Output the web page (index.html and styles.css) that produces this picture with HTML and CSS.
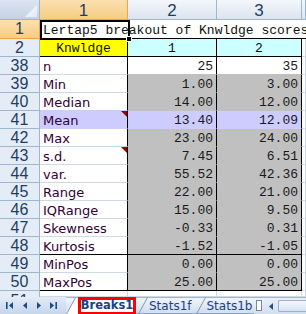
FILE: index.html
```html
<!DOCTYPE html>
<html>
<head>
<meta charset="utf-8">
<link rel="stylesheet" href="styles.css">
</head>
<body>
<div class="app">
  <div class="sheet">
    <div class="corner"><span class="corner-tri"></span></div>
    <div class="ch sel">1</div>
    <div class="ch">2</div>
    <div class="ch">3</div>
    <div class="ch edge"></div>

    <div class="rh sel">1</div>
    <div class="c title">Lertap5 breakout of Knwldge scores</div>
    <div class="selbox"><span class="handle"></span></div>

    <div class="rh">2</div>
    <div class="c hd yellow">Knwldge</div>
    <div class="c hd cyan">1</div>
    <div class="c hd cyan">2</div>
    <div class="c"></div>

    <div class="rh">38</div>
    <div class="c k">n</div>
    <div class="c d w">25</div>
    <div class="c d w">35</div>
    <div class="c"></div>

    <div class="rh">39</div>
    <div class="c k">Min</div>
    <div class="c d g">1.00</div>
    <div class="c d g">3.00</div>
    <div class="c"></div>

    <div class="rh">40</div>
    <div class="c k before-lv">Median</div>
    <div class="c d g">14.00</div>
    <div class="c d g">12.00</div>
    <div class="c"></div>

    <div class="rh">41</div>
    <div class="c k lv cm">Mean</div>
    <div class="c d lv">13.40</div>
    <div class="c d lv">12.09</div>
    <div class="c"></div>

    <div class="rh">42</div>
    <div class="c k">Max</div>
    <div class="c d g">23.00</div>
    <div class="c d g">24.00</div>
    <div class="c"></div>

    <div class="rh">43</div>
    <div class="c k cm">s.d.</div>
    <div class="c d g">7.45</div>
    <div class="c d g">6.51</div>
    <div class="c"></div>

    <div class="rh">44</div>
    <div class="c k">var.</div>
    <div class="c d g">55.52</div>
    <div class="c d g">42.36</div>
    <div class="c"></div>

    <div class="rh">45</div>
    <div class="c k">Range</div>
    <div class="c d g">22.00</div>
    <div class="c d g">21.00</div>
    <div class="c"></div>

    <div class="rh">46</div>
    <div class="c k">IQRange</div>
    <div class="c d g">15.00</div>
    <div class="c d g">9.50</div>
    <div class="c"></div>

    <div class="rh">47</div>
    <div class="c k">Skewness</div>
    <div class="c d g">-0.33</div>
    <div class="c d g">0.31</div>
    <div class="c"></div>

    <div class="rh">48</div>
    <div class="c k bb">Kurtosis</div>
    <div class="c d g bb">-1.52</div>
    <div class="c d g bb">-1.05</div>
    <div class="c"></div>

    <div class="rh">49</div>
    <div class="c k">MinPos</div>
    <div class="c d g">0.00</div>
    <div class="c d g">0.00</div>
    <div class="c"></div>

    <div class="rh">50</div>
    <div class="c k bb">MaxPos</div>
    <div class="c d g bb">25.00</div>
    <div class="c d g bb">25.00</div>
    <div class="c"></div>

    <div class="rh last">51</div>
    <div class="c"></div>
    <div class="c"></div>
    <div class="c"></div>
    <div class="c"></div>
  </div>

  <div class="tabbar">
    <div class="nav">
      <svg width="66" height="17" viewBox="0 0 66 17">
        <rect x="6" y="5" width="1.6" height="7" fill="#1E4B86"/>
        <polygon points="13,5 13,12 9,8.5" fill="#1E4B86"/>
        <polygon points="27,5 27,12 23,8.5" fill="#1E4B86"/>
        <polygon points="37,5 37,12 41,8.5" fill="#1E4B86"/>
        <polygon points="50,5 50,12 54,8.5" fill="#1E4B86"/>
        <rect x="55.4" y="5" width="1.6" height="7" fill="#1E4B86"/>
      </svg>
    </div>
    <svg class="slant" width="12" height="17" viewBox="0 0 12 17">
      <polygon points="0,17 9,1 12,1 12,17" fill="#ffffff"/>
      <line x1="0.5" y1="17" x2="9.5" y2="0.5" stroke="#7F98BC" stroke-width="1"/>
    </svg>
    <div class="tab-active">Breaks1</div>
    <div class="tab">
      <svg class="slant" width="12" height="17" viewBox="0 0 12 17">
        <line x1="2.5" y1="17" x2="11.5" y2="0.5" stroke="#7F98BC" stroke-width="1"/>
      </svg>
      <span class="tab-label">Stats1f</span>
    </div>
    <div class="tab">
      <svg class="slant" width="12" height="17" viewBox="0 0 12 17">
        <line x1="2.5" y1="17" x2="11.5" y2="0.5" stroke="#7F98BC" stroke-width="1"/>
      </svg>
      <span class="tab-label">Stats1b</span>
    </div>
    <div class="split"></div>
    <div class="hscroll">
      <svg width="14" height="17" viewBox="0 0 14 17">
        <polygon points="9,5 9,12 5,8.5" fill="#2B4E7E"/>
      </svg>
      <div class="thumb"></div>
    </div>
  </div>
</div>
</body>
</html>
```

FILE: styles.css
```css
* {
  box-sizing: border-box;
  margin: 0;
  padding: 0;
}

html, body {
  width: 306px;
  height: 314px;
  overflow: hidden;
  background: #ffffff;
}

.app {
  width: 306px;
  height: 314px;
  display: flex;
  flex-direction: column;
}

.sheet {
  display: grid;
  grid-template-columns: 40px 88px 89px 85px 4px;
  grid-template-rows: 20px 19px 18px repeat(13, 18px) 6px;
  height: 297px;
  overflow: hidden;
  font-family: "DejaVu Sans", sans-serif;
}

/* headers */
.corner {
  background: linear-gradient(#DCE5F1, #C4D2E5);
  border-right: 1px solid #9EB6CE;
  border-bottom: 1px solid #9EB6CE;
  display: flex;
  align-items: flex-end;
  justify-content: flex-end;
  padding: 0 2px 2px 0;
}

.corner-tri {
  width: 12px;
  height: 12px;
  background: linear-gradient(135deg, #FFFFFF, #E1E8F2);
  clip-path: polygon(100% 0, 100% 100%, 0 100%);
}

.ch {
  background: linear-gradient(#F4F7FB, #DCE4EF);
  border-right: 1px solid #9EB6CE;
  border-bottom: 1px solid #9EB6CE;
  color: #1F3D63;
  font: 17px "Liberation Sans", Arial, sans-serif;
  display: flex;
  align-items: center;
  justify-content: center;
  line-height: 1;
  padding-top: 1px;
}

.ch.sel {
  background: linear-gradient(#FBE0AE, #F6CD84);
  border-right-color: #F2A640;
  border-bottom-color: #F2A640;
}

.rh {
  background: #E4ECF7;
  border-right: 1px solid #9EB6CE;
  border-bottom: 1px solid #9EB6CE;
  color: #1F3D63;
  font: 16px "Liberation Sans", Arial, sans-serif;
  display: flex;
  align-items: center;
  justify-content: center;
  line-height: 1;
}

.rh.sel {
  grid-row: 2;
  grid-column: 1;
  background: linear-gradient(#FBE0AE, #F6CD84);
  border-right-color: #F2A640;
  border-bottom-color: #F2A640;
}

.rh.last {
  align-items: flex-start;
  padding-top: 2px;
  overflow: hidden;
  border-bottom: none;
}

/* cells */
.c {
  position: relative;
  background: #ffffff;
  border-right: 1px solid #D0D7E5;
  border-bottom: 1px solid #D0D7E5;
  overflow: hidden;
  white-space: nowrap;
  display: flex;
  align-items: flex-end;
  line-height: 15px;
}

.title {
  grid-row: 2;
  grid-column: 2 / 6;
  border-right: none;
  border-bottom-color: #000000;
  font: 13px "Liberation Mono", "Courier New", monospace;
  color: #111111;
  padding-left: 3px;
}

.selbox {
  grid-row: 2;
  grid-column: 2;
  margin: 0 -2px -1px 0;
  border: 2px solid #000000;
  position: relative;
  z-index: 2;
}

.handle {
  position: absolute;
  right: -4px;
  bottom: -4px;
  width: 6px;
  height: 6px;
  background: #000000;
  border: 1px solid #ffffff;
}

.hd {
  justify-content: center;
  font: 13px "Liberation Mono", "Courier New", monospace;
  color: #111111;
  border-right-color: #000000;
  border-bottom-color: #000000;
}

.yellow {
  background: #FFFF00;
}

.cyan {
  background: #CCFFFF;
}

.k {
  border-right-color: #000000;
  padding-left: 3px;
  font: 13px "DejaVu Sans", Verdana, sans-serif;
  color: #330033;
}

.d {
  border-right-color: #000000;
  justify-content: flex-end;
  padding-right: 3px;
  font: 13px "Liberation Mono", "Courier New", monospace;
  color: #1A1A1A;
}

.w {
  border-bottom-color: #C0C0C0;
}

.g {
  background: #C0C0C0;
  border-bottom-color: #C0C0C0;
}

.lv {
  background: #CCCCFF;
  border-bottom-color: #CCCCFF;
}

.before-lv {
  border-bottom-color: #CCCCFF;
}

.c.bb {
  border-bottom-color: #000000;
}

.cm::after {
  content: "";
  position: absolute;
  top: 0;
  right: 0;
  width: 0;
  height: 0;
  border-top: 6px solid #990000;
  border-left: 6px solid transparent;
}

/* tab bar */
.tabbar {
  height: 17px;
  display: flex;
  align-items: stretch;
  background: linear-gradient(#F1F5FB, #CFDCEE);
  border-top: 1px solid #9EB6CE;
  font-family: "DejaVu Sans", Verdana, sans-serif;
  overflow: visible;
}

.nav {
  width: 66px;
  margin-top: -1px;
  background: linear-gradient(#E3EBF6, #C6D6EC);
  display: flex;
}

.slant {
  display: block;
  flex: none;
  margin-top: -1px;
}

.tab-active {
  width: 58px;
  height: 18px;
  margin-top: -1px;
  border: 3px solid #FF0000;
  background: #ffffff;
  color: #15428B;
  font-weight: bold;
  font-size: 11.5px;
  display: flex;
  align-items: center;
  justify-content: center;
  line-height: 1;
  flex: none;
}

.tab {
  display: flex;
  flex: none;
  border-bottom: 1px solid #8BA5C9;
}

.tab-label {
  color: #15428B;
  font-size: 12px;
  line-height: 1;
  display: flex;
  align-items: center;
  padding: 0 2px 0 1px;
}

.split {
  width: 6px;
  height: 11px;
  margin: 2px 2px 0 2px;
  background: #ffffff;
  border: 1px solid #6F86A6;
  flex: none;
}

.hscroll {
  flex: 1;
  display: flex;
  background: linear-gradient(#E9EFF8, #D3DFEF);
}

.hscroll svg {
  flex: none;
}

.thumb {
  flex: 1;
  margin: 2px 0 2px 0;
  border: 1px solid #98B1D3;
  border-right: none;
  border-radius: 2px 0 0 2px;
  background: linear-gradient(#F6F9FD, #D5E2F3);
}
```
